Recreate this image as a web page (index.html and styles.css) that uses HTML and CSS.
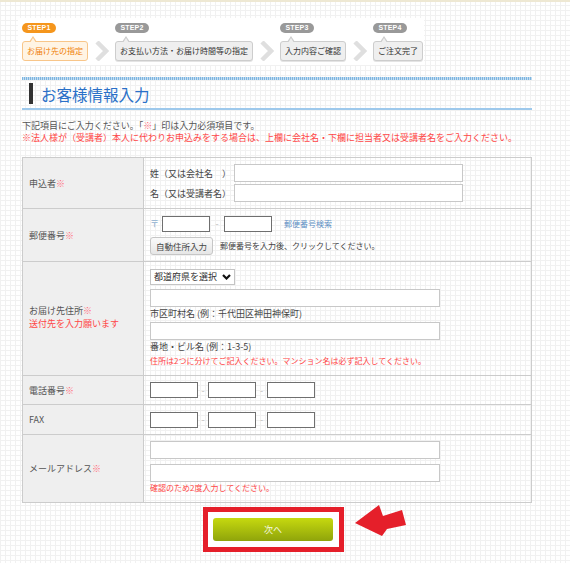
FILE: index.html
```html
<!DOCTYPE html>
<html lang="ja">
<head>
<meta charset="utf-8">
<title>お客様情報入力</title>
<link rel="stylesheet" href="styles.css">
</head>
<body>
<div class="page">
  <ol class="steps">
    <li class="step is-current"><span class="badge">STEP1</span><span class="box">お届け先の指定</span></li>
    <li class="sep" aria-hidden="true"><svg viewBox="0 0 15 20" width="15" height="20"><polyline points="3,1 12,10 3,19"/></svg></li>
    <li class="step"><span class="badge">STEP2</span><span class="box">お支払い方法・お届け時間等の指定</span></li>
    <li class="sep" aria-hidden="true"><svg viewBox="0 0 15 20" width="15" height="20"><polyline points="3,1 12,10 3,19"/></svg></li>
    <li class="step"><span class="badge">STEP3</span><span class="box">入力内容ご確認</span></li>
    <li class="sep" aria-hidden="true"><svg viewBox="0 0 15 20" width="15" height="20"><polyline points="3,1 12,10 3,19"/></svg></li>
    <li class="step"><span class="badge">STEP4</span><span class="box">ご注文完了</span></li>
  </ol>

  <div class="heading"><h1>お客様情報入力</h1></div>
  <p class="lead first">下記項目にご入力ください。「<span class="req">※</span>」印は入力必須項目です。</p>
  <p class="lead warn">※法人様が（受講者）本人に代わりお申込みをする場合は、上欄に会社名・下欄に担当者又は受講者名をご入力ください。</p>

  <div class="form">
    <div class="th">申込者<span class="req">※</span></div>
    <div class="td">
      <div class="name-row"><span class="name-label">姓（又は会社名　）</span><input class="text name" type="text"></div>
      <div class="name-row gap2"><span class="name-label">名（又は受講者名）</span><input class="text name" type="text"></div>
    </div>

    <div class="th">郵便番号<span class="req">※</span></div>
    <div class="td">
      <div class="inline-row">
        <span class="postmark">〒</span>
        <input class="text short" type="text">
        <span class="dash zip-dash">-</span>
        <input class="text short" type="text">
        <a class="zip-link" href="#">郵便番号検索</a>
      </div>
      <div class="inline-row gap5">
        <button class="auto-btn" type="button">自動住所入力</button>
        <span class="hint">郵便番号を入力後、クリックしてください。</span>
      </div>
    </div>

    <div class="th two-line">お届け先住所<span class="req">※</span><br><span class="warn-text">送付先を入力願います</span></div>
    <div class="td lift">
      <div class="pref">
        <select class="pref-select"><option>都道府県を選択</option></select>
        <svg class="pref-caret" viewBox="0 0 9 6" width="9" height="6"><polyline points="1,1 4.5,4.5 8,1"/></svg>
      </div>
      <input class="text wide" type="text">
      <span class="caption">市区町村名 (例：千代田区神田神保町)</span>
      <input class="text wide gap1" type="text">
      <span class="caption">番地・ビル名 (例：1-3-5)</span>
      <span class="note gap1">住所は2つに分けてご記入ください。マンション名は必ず記入してください。</span>
    </div>

    <div class="th">電話番号<span class="req">※</span></div>
    <div class="td">
      <div class="inline-row">
        <input class="text short" type="text">
        <span class="dash tel-dash">-</span>
        <input class="text short" type="text">
        <span class="dash tel-dash2">-</span>
        <input class="text short" type="text">
      </div>
    </div>

    <div class="th">FAX</div>
    <div class="td">
      <div class="inline-row">
        <input class="text short" type="text">
        <span class="dash tel-dash">-</span>
        <input class="text short" type="text">
        <span class="dash tel-dash2">-</span>
        <input class="text short" type="text">
      </div>
    </div>

    <div class="th">メールアドレス<span class="req">※</span></div>
    <div class="td lift">
      <input class="text wide" type="text">
      <input class="text wide gap5" type="text">
      <span class="note">確認のため2度入力してください。</span>
    </div>
  </div>

  <div class="actions">
    <div class="cta">
      <button class="next" type="button">次へ</button>
      <svg class="pointer" viewBox="0 0 52 32" width="52" height="32" aria-hidden="true"><polygon points="0,18 24,0 28,11 47,5 51,20 32,24 27,31"/></svg>
    </div>
  </div>
</div>
</body>
</html>
```
FILE: styles.css
```css
html, body {
  margin: 0;
  padding: 0;
}
body {
  font-family: "Noto Sans CJK JP", "Noto Sans", sans-serif;
  color: #444;
  background-color: #fff;
  background-image:
    linear-gradient(#f1f1f1 1px, transparent 1px),
    linear-gradient(90deg, #f1f1f1 1px, transparent 1px);
  background-size: 5px 5px;
  border-top: 2px solid #eee8d3;
  min-height: 561px;
}
.page {
  width: 510px;
  margin-left: 22px;
  padding-top: 16px;
}

/* steps */
.steps {
  list-style: none;
  margin: 0 0 0 -4px;
  padding: 5px 1px 4px 4px;
  display: flex;
  width: fit-content;
  background: #fff;
}
.step {
  display: flex;
  flex-direction: column;
  align-items: flex-start;
}
.badge {
  width: 34px;
  height: 10px;
  border-radius: 5px;
  background: #999;
  color: #fff;
  font-family: "Liberation Sans", Arial, sans-serif;
  font-weight: bold;
  font-size: 7px;
  line-height: 10px;
  text-align: center;
  letter-spacing: 0.2px;
}
.box {
  position: relative;
  margin-top: 8px;
  height: 20px;
  box-sizing: border-box;
  padding: 0 4px;
  border: 1px solid #cdcdcd;
  border-radius: 3px;
  background: #efefef;
  color: #333;
  font-size: 8px;
  line-height: 18px;
  white-space: nowrap;
  box-shadow: 0 1px 0 #e4e4e4;
}
.box::before,
.box::after {
  content: "";
  position: absolute;
  width: 0;
  height: 0;
  border-style: solid;
  border-color: transparent;
}
.box::before {
  left: 6px;
  top: -6px;
  border-width: 0 4px 6px 4px;
  border-bottom-color: #cdcdcd;
}
.box::after {
  left: 7px;
  top: -4px;
  border-width: 0 3px 5px 3px;
  border-bottom-color: #efefef;
}
.is-current .badge {
  background: #f5961d;
}
.is-current .box {
  background: #fff4e4;
  border-color: #f8c68a;
  color: #ef7f0a;
  box-shadow: none;
}
.is-current .box::before {
  border-bottom-color: #f8c68a;
}
.is-current .box::after {
  border-bottom-color: #fff4e4;
}
.sep {
  align-self: flex-end;
  margin: 0 6px;
  height: 20px;
}
.sep svg {
  display: block;
}
.sep polyline {
  fill: none;
  stroke: #dfdfdf;
  stroke-width: 4.5;
}

/* heading */
.heading {
  margin-top: 12px;
  padding-top: 3px;
  background-image: repeating-linear-gradient(90deg, #7db5e0 0 1px, #c3ddf1 1px 2px);
  background-size: 100% 3px;
  background-repeat: no-repeat;
}
.heading h1 {
  margin: 0;
  height: 28px;
  display: flex;
  align-items: center;
  padding-left: 7px;
  border-bottom: 2px solid #9ec9ec;
  font-size: 15.5px;
  font-weight: normal;
  color: #2a70c8;
  letter-spacing: 0;
}
.heading h1::before {
  content: "";
  width: 4px;
  height: 21px;
  margin-right: 8px;
  background: #333;
  position: relative;
  top: -1px;
}

/* lead */
.lead {
  margin: 0;
  font-size: 9px;
  line-height: 12px;
  color: #555;
  white-space: nowrap;
}
.lead.first {
  margin-top: 10px;
}
.warn {
  color: #ff4646;
}
.req {
  color: #ff6b7a;
}
.warn-text {
  color: #ff4646;
}

/* form grid */
.form {
  margin-top: 13px;
  display: grid;
  grid-template-columns: 121px 388px;
  grid-template-rows: 51px 53px 114px 29px 30px 68px;
  border-top: 1px solid #cccccc;
  border-left: 1px solid #cccccc;
}
.th,
.td {
  box-sizing: border-box;
  border-right: 1px solid #cccccc;
  border-bottom: 1px solid #cccccc;
  font-size: 9px;
}
.th {
  background: #efefef;
  color: #555;
  padding-left: 6px;
  display: flex;
  align-items: center;
  line-height: 13px;
}
.th.two-line {
  display: block;
  padding-top: 42px;
}
.td {
  padding-left: 6px;
  display: flex;
  flex-direction: column;
  justify-content: center;
  align-items: flex-start;
}
.td.lift {
  padding-bottom: 3px;
}
.name-row {
  display: flex;
  align-items: center;
  color: #444;
}
.name-label {
  width: 84px;
  white-space: nowrap;
}

.text {
  box-sizing: border-box;
  margin: 0;
  height: 18px;
  padding: 0 3px;
  border: 1px solid #c8c8c8;
  border-radius: 0;
  background: #fff;
  font-family: inherit;
  font-size: 9px;
  outline: none;
}
.text.name { width: 229px; }
.text.wide { width: 290px; }
.text.short {
  width: 48px;
  height: 16px;
  border-color: #6f6f6f;
}

.gap1 { margin-top: 1px; }
.gap2 { margin-top: 2px; }
.gap5 { margin-top: 5px; }

.inline-row {
  display: flex;
  align-items: center;
  white-space: nowrap;
}
.postmark {
  width: 12px;
  color: #8fb0d0;
  font-size: 9px;
}
.dash {
  color: #bbb;
  text-align: center;
  font-size: 9px;
}
.zip-dash { width: 14px; }
.tel-dash { width: 10px; }
.tel-dash2 { width: 11px; }
.zip-link {
  margin-left: 12px;
  font-size: 8px;
  color: #5f90c4;
  text-decoration: none;
}
.auto-btn {
  box-sizing: border-box;
  margin: 0;
  width: 63px;
  height: 18px;
  padding: 0;
  border: 1px solid #c6c6c6;
  border-radius: 3px;
  background: linear-gradient(#fafafa, #e6e6e6);
  color: #444;
  font-family: inherit;
  font-size: 8.5px;
  line-height: 16px;
}
.hint {
  margin-left: 7px;
  font-size: 8px;
  color: #444;
}

.pref {
  box-sizing: border-box;
  display: flex;
  align-items: center;
  width: 85px;
  height: 16px;
  margin-bottom: 4px;
  border: 1px solid #c4c4c4;
  background: #fff;
}
.pref-select {
  appearance: none;
  -webkit-appearance: none;
  border: 0;
  margin: 0;
  padding: 0 0 0 3px;
  background: transparent;
  font-family: inherit;
  font-size: 9px;
  color: #333;
  width: 69px;
  height: 14px;
  line-height: 14px;
  outline: none;
}
.pref-caret {
  margin-left: 2px;
}
.pref-caret polyline {
  fill: none;
  stroke: #111;
  stroke-width: 2.2;
}
.caption {
  display: block;
  font-size: 9px;
  line-height: 14px;
  color: #444;
  white-space: nowrap;
}
.note {
  display: block;
  font-size: 8px;
  line-height: 11px;
  color: #ff4646;
  white-space: nowrap;
}

/* submit */
.actions {
  margin-top: 4px;
  display: flex;
  justify-content: center;
  padding-right: 7px;
}
.cta {
  position: relative;
  border: 5px solid #e51f2a;
  padding: 6px 6px 6px 5px;
  background: #fff;
}
.next {
  display: block;
  width: 120px;
  height: 23px;
  margin: 0;
  padding: 0;
  border: 0;
  border-radius: 3px;
  background: linear-gradient(#c6d90f, #8fa40b);
  color: #f5f8e0;
  font-family: inherit;
  font-size: 9px;
}
.pointer {
  position: absolute;
  left: 147px;
  top: -7px;
}
.pointer polygon {
  fill: #e51f2a;
}
```
